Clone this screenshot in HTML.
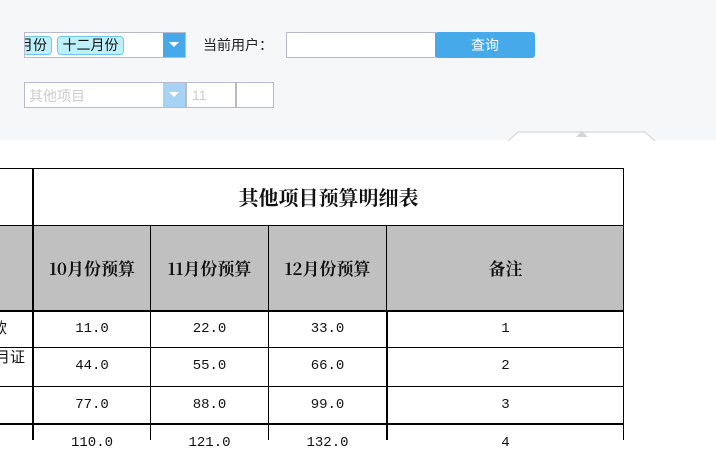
<!DOCTYPE html>
<html><head><meta charset="utf-8"><style>
body{margin:0;width:716px;height:440px;overflow:hidden;background:#fff;position:relative;font-family:"Liberation Sans","Noto Sans CJK SC",sans-serif}
.a{position:absolute}
.hl{position:absolute;background:#000;height:1px}
.vl{position:absolute;background:#000;width:1px}
.c{position:absolute;text-align:center;font-family:"Liberation Mono","Noto Sans CJK SC",monospace;font-size:14px;color:#111}
.h{position:absolute;text-align:center;font-family:"Noto Serif CJK SC","Liberation Serif",serif;font-weight:bold;font-size:17px;color:#111}
</style></head><body>
<div class="a" style="left:0;top:0;width:716px;height:140px;background:#f6f7f9"></div>
<div class="a" style="left:24px;top:32px;width:160px;height:24px;background:#fff;border:1px solid #b8b9cc;overflow:hidden"></div>
<div class="a" style="left:25px;top:36px;width:26px;height:17px;background:#bdf0fb;border:1px solid #6cc8ee;border-left:none;border-radius:0 4px 4px 0;font-size:14px;line-height:17px;overflow:hidden;color:#111"><span style="margin-left:-6px">月份</span></div>
<div class="a" style="left:57px;top:36px;width:65px;height:17px;background:#bdf0fb;border:1px solid #6cc8ee;border-radius:4px;font-size:14px;line-height:17px;text-align:center;color:#111">十二月份</div>
<div class="a" style="left:163px;top:33px;width:22px;height:24px;background:#46a9ea"></div>
<div class="a" style="left:169px;top:42px;width:0;height:0;border-left:5px solid transparent;border-right:5px solid transparent;border-top:5px solid #fff"></div>
<div class="a" style="left:203px;top:35px;font-size:14px;color:#222">当前用户：</div>
<div class="a" style="left:286px;top:32px;width:148px;height:24px;background:#fff;border:1px solid #b8b9cc"></div>
<div class="a" style="left:435px;top:32px;width:100px;height:26px;background:#46a9ea;border-radius:3px;color:#fff;font-size:14px;line-height:26px;text-align:center">查询</div>
<div class="a" style="left:24px;top:82px;width:160px;height:24px;background:#fff;border:1px solid #b8b9cc"></div>
<div class="a" style="left:29px;top:86px;font-size:14px;color:#ccc">其他项目</div>
<div class="a" style="left:163px;top:83px;width:22px;height:24px;background:#a6d3f3"></div>
<div class="a" style="left:169px;top:92px;width:0;height:0;border-left:5px solid transparent;border-right:5px solid transparent;border-top:5px solid #fff"></div>
<div class="a" style="left:186px;top:82px;height:24px;background:#fff;border:1px solid #b8b9cc;color:#ccc;font-size:14px;line-height:24px;padding-left:5px;width:43px">11</div>
<div class="a" style="left:236px;top:82px;width:36px;height:24px;background:#fff;border:1px solid #b8b9cc"></div>
<svg class="a" style="left:508px;top:130px" width="148" height="11"><path d="M0 11 L10 2 L137 2 L147 11" fill="#fff" stroke="#ddd" stroke-width="1.5"/><path d="M68 7 L74 1 L80 7Z" fill="#d5d5d5"/></svg>
<div class="a" style="left:0;top:226px;width:623px;height:84px;background:#c0c0c0"></div>
<div class="hl" style="left:0;top:168px;width:624px"></div>
<div class="hl" style="left:0;top:225px;width:624px"></div>
<div class="hl" style="left:0;top:310px;width:624px;height:2px"></div>
<div class="hl" style="left:0;top:347px;width:624px"></div>
<div class="hl" style="left:0;top:386px;width:624px"></div>
<div class="hl" style="left:0;top:423px;width:624px;height:2px"></div>
<div class="vl" style="left:32px;top:168px;height:272px;width:2px"></div>
<div class="vl" style="left:150px;top:225px;height:215px"></div>
<div class="vl" style="left:268px;top:225px;height:215px"></div>
<div class="vl" style="left:386px;top:225px;height:86px"></div>
<div class="vl" style="left:386px;top:310px;height:130px;width:2px"></div>
<div class="vl" style="left:623px;top:168px;height:272px"></div>
<div class="h" style="left:34px;top:182px;width:589px;font-size:20px">其他项目预算明细表</div>
<div class="h" style="left:34px;top:255px;width:116px">10月份预算</div>
<div class="h" style="left:151px;top:255px;width:117px">11月份预算</div>
<div class="h" style="left:269px;top:255px;width:117px">12月份预算</div>
<div class="h" style="left:388px;top:255px;width:235px">备注</div>
<div class="a" style="left:-8px;top:317px;font-size:15px;color:#111">款</div>
<div class="a" style="left:-5px;top:346px;font-size:15px;color:#111">月证</div>
<div class="c" style="left:34px;top:321px;width:116px">11.0</div>
<div class="c" style="left:151px;top:321px;width:117px">22.0</div>
<div class="c" style="left:269px;top:321px;width:117px">33.0</div>
<div class="c" style="left:388px;top:321px;width:235px">1</div>
<div class="c" style="left:34px;top:358px;width:116px">44.0</div>
<div class="c" style="left:151px;top:358px;width:117px">55.0</div>
<div class="c" style="left:269px;top:358px;width:117px">66.0</div>
<div class="c" style="left:388px;top:358px;width:235px">2</div>
<div class="c" style="left:34px;top:397px;width:116px">77.0</div>
<div class="c" style="left:151px;top:397px;width:117px">88.0</div>
<div class="c" style="left:269px;top:397px;width:117px">99.0</div>
<div class="c" style="left:388px;top:397px;width:235px">3</div>
<div class="c" style="left:34px;top:435px;width:116px">110.0</div>
<div class="c" style="left:151px;top:435px;width:117px">121.0</div>
<div class="c" style="left:269px;top:435px;width:117px">132.0</div>
<div class="c" style="left:388px;top:435px;width:235px">4</div>
</body></html>
